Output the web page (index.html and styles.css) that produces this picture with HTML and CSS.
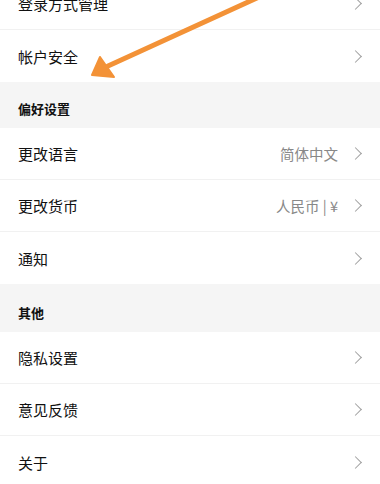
FILE: index.html
```html
<!DOCTYPE html>
<html lang="zh-CN">
<head>
    <meta charset="UTF-8">
    <meta name="viewport" content="width=device-width, initial-scale=1.0">
    <title>设置</title>
    <link rel="stylesheet" href="styles.css">
</head>
<body>
    <div class="page">
        <ul class="group">
            <li class="row line"><span class="label">登录方式管理</span><span class="arrow"></span></li>
            <li class="row"><span class="label">帐户安全</span><span class="arrow"></span></li>
        </ul>
        <h3 class="head">偏好设置</h3>
        <ul class="group">
            <li class="row line"><span class="label">更改语言</span><span class="value">简体中文</span><span class="arrow"></span></li>
            <li class="row line"><span class="label">更改货币</span><span class="value">人民币 | ¥</span><span class="arrow"></span></li>
            <li class="row"><span class="label">通知</span><span class="arrow"></span></li>
        </ul>
        <h3 class="head head2">其他</h3>
        <ul class="group">
            <li class="row line"><span class="label">隐私设置</span><span class="arrow"></span></li>
            <li class="row line"><span class="label">意见反馈</span><span class="arrow"></span></li>
            <li class="row"><span class="label">关于</span><span class="arrow"></span></li>
        </ul>

        <!-- 标注箭头 -->
        <svg class="mark" width="380" height="90" viewBox="0 0 380 90">
            <line x1="270" y1="-8" x2="108" y2="66" stroke="#f39237" stroke-width="5" stroke-linecap="round"/>
            <polygon points="92,75 100,57 114,77" fill="#f39237" stroke="#f39237" stroke-width="2" stroke-linejoin="round"/>
        </svg>
    </div>
</body>
</html>
```

FILE: styles.css
```css
*{margin: 0;padding: 0;box-sizing: border-box;}
body{background-color: #fff;font-family: "Noto Sans CJK SC", "Noto Sans", sans-serif;color: #111;overflow: hidden;}
.page{position: relative;margin-top: -22px;}
ul{list-style: none;}

.group{background-color: #fff;}
.row{height: 52px;display: flex;align-items: center;padding: 0 18px;font-size: 15px;}
.line{border-bottom: 1px solid #f1f1f1;}
.label{flex: 1;}
.value{font-size: 14.5px;color: #888;margin-right: 13px;}
.arrow{width: 9px;height: 9px;border-top: 1.2px solid #a0a0a0;border-right: 1.2px solid #a0a0a0;transform: rotate(45deg);margin-right: 2px;}

.head{height: 46px;background-color: #f5f5f5;display: flex;align-items: flex-end;padding: 0 18px 10px;font-size: 13px;font-weight: 700;line-height: 18px;color: #111;}
.head2{height: 48px;}

.mark{position: absolute;left: 0;top: 22px;}
```
